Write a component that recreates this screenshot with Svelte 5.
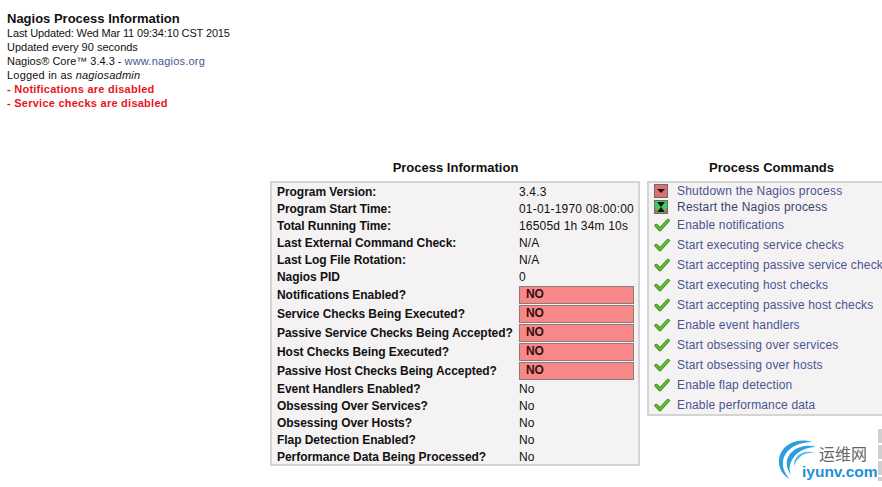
<script>
  const info = [
    ['Program Version:', '3.4.3'],
    ['Program Start Time:', '01-01-1970 08:00:00'],
    ['Total Running Time:', '16505d 1h 34m 10s'],
    ['Last External Command Check:', 'N/A'],
    ['Last Log File Rotation:', 'N/A'],
    ['Nagios PID', '0'],
    ['Notifications Enabled?', 'NO', true],
    ['Service Checks Being Executed?', 'NO', true],
    ['Passive Service Checks Being Accepted?', 'NO', true],
    ['Host Checks Being Executed?', 'NO', true],
    ['Passive Host Checks Being Accepted?', 'NO', true],
    ['Event Handlers Enabled?', 'No'],
    ['Obsessing Over Services?', 'No'],
    ['Obsessing Over Hosts?', 'No'],
    ['Flap Detection Enabled?', 'No'],
    ['Performance Data Being Processed?', 'No']
  ];

  const commands = [
    'Enable notifications',
    'Start executing service checks',
    'Start accepting passive service checks',
    'Start executing host checks',
    'Start accepting passive host checks',
    'Enable event handlers',
    'Start obsessing over services',
    'Start obsessing over hosts',
    'Enable flap detection',
    'Enable performance data'
  ];
</script>

<div class="page">
  <div class="head">
    <div class="title">Nagios Process Information</div>
    <div class="tight">Last Updated: Wed Mar 11 09:34:10 CST 2015</div>
    <div>Updated every 90 seconds</div>
    <div>Nagios® Core™ 3.4.3 - <span class="link wide">www.nagios.org</span></div>
    <div class="wide">Logged in as <i>nagiosadmin</i></div>
    <div class="warn">- Notifications are disabled</div>
    <div class="warn">- Service checks are disabled</div>
  </div>

  <div class="main">
    <section class="info">
      <h2>Process Information</h2>
      <div class="box info-box">
        {#each info as [label, value, bad]}
          <div class="row" class:bad>
            <b>{label}</b>
            {#if bad}
              <span class="no">{value}</span>
            {:else}
              <span class="val">{value}</span>
            {/if}
          </div>
        {/each}
      </div>
    </section>

    <section class="cmds">
      <h2>Process Commands</h2>
      <div class="box cmd-box">
        <div class="cmd small">
          <svg width="14" height="14" viewBox="0 0 14 14">
            <rect x="0.5" y="0.5" width="13" height="13" fill="#e07070" stroke="#6a6a6a" />
            <path d="M3 5h8l-4 4z" fill="#111" />
          </svg>
          <span class="link">Shutdown the Nagios process</span>
        </div>
        <div class="cmd small">
          <svg width="14" height="14" viewBox="0 0 14 14">
            <rect x="0.5" y="0.5" width="13" height="13" fill="#3fcf5f" stroke="#6a6a6a" />
            <path d="M3 2h8L7 7z" fill="#111" />
            <path d="M3 12h8L7 7z" fill="#111" />
            <path d="M1 13V8l4 5z M13 13V8l-4 5z" fill="#c06a60" />
          </svg>
          <span class="plain">Restart the Nagios process</span>
        </div>
        {#each commands as text}
          <div class="cmd">
            <svg width="16" height="16" viewBox="0 0 16 16">
              <path d="M2.2 8.6L6 12.4 14 3.6" fill="none" stroke="#3a8a1a" stroke-width="3.6" stroke-linejoin="round" stroke-linecap="round" />
              <path d="M2.2 8.6L6 12.4 14 3.6" fill="none" stroke="#62c22e" stroke-width="2" stroke-linejoin="round" stroke-linecap="round" />
            </svg>
            <span class="link">{text}</span>
          </div>
        {/each}
      </div>
    </section>
  </div>

  <div class="logo">
    <svg width="42" height="44" viewBox="0 0 42 44">
      <path d="M35 3C20-2 3 5 1 20c-1 9 4 17 11 20C6 34 3 26 6 18 10 8 22 3 35 3z" fill="#2a9fe0" />
      <path d="M38 8C26 4 12 10 9 21c-1 6 1 11 4 15-2-5-2-10 1-15C18 13 28 8 38 8z" fill="#2a9fe0" />
      <path d="M37 14C29 11 20 14 17 21c-1 2-1 4-1 6 1-2 2-5 4-7 4-5 10-7 17-6z" fill="#55b5e8" />
    </svg>
    <div class="logo-cn">运维网</div>
    <div class="logo-en">iyunv.com</div>
  </div>
  <div class="strip"></div>
</div>

<style>
  :global(body) {
    margin: 0;
    background: #fff;
  }
  .page {
    position: relative;
    width: 882px;
    height: 487px;
    overflow: hidden;
    font-family: "Liberation Sans", Arial, sans-serif;
    font-size: 11px;
    line-height: 14px;
    color: #111;
  }
  .head {
    padding: 11px 0 0 7px;
    height: 149px;
    box-sizing: border-box;
  }
  .title {
    font-size: 13px;
    font-weight: bold;
    line-height: 15px;
  }
  .tight {
    letter-spacing: -0.14px;
  }
  .wide {
    letter-spacing: 0.2px;
  }
  .link {
    color: #4a5590;
  }
  .warn {
    color: #e8141c;
    font-weight: bold;
    letter-spacing: 0.25px;
  }
  .main {
    display: flex;
    gap: 7px;
    padding: 11px 0 0 270px;
  }
  h2 {
    margin: 0 0 5px;
    padding-left: 1px;
    font-size: 13px;
    line-height: 16px;
    font-weight: bold;
    text-align: center;
    color: #111;
  }
  .box {
    box-sizing: border-box;
    background: #f4f2f3;
    border: 2px solid #d4d4d4;
  }
  .info {
    width: 370px;
    flex: none;
  }
  .info-box {
    height: 285px;
    padding: 0 5px;
    font-size: 12px;
  }
  .row {
    display: grid;
    grid-template-columns: 242px 115px;
    align-items: center;
    height: 17px;
    letter-spacing: -0.05px;
  }
  .row.bad {
    height: 19px;
  }
  .val {
    letter-spacing: 0.18px;
  }
  .no {
    box-sizing: border-box;
    height: 18px;
    line-height: 15px;
    padding-left: 6px;
    background: #f88888;
    border: 1px solid #8a7a7a;
    font-weight: bold;
    color: #331111;
  }
  .cmds {
    width: 248px;
    flex: none;
  }
  .cmd-box {
    height: 235px;
    padding: 0 0 0 5px;
    font-size: 12px;
    letter-spacing: 0.16px;
  }
  .cmd {
    display: flex;
    align-items: center;
    height: 20px;
    white-space: nowrap;
  }
  .cmd svg {
    flex: none;
    margin-right: 7px;
  }
  .cmd.small {
    height: 16px;
    letter-spacing: 0.22px;
  }
  .cmd.small svg {
    margin-right: 9px;
  }
  .plain {
    color: #3a4470;
  }
  .logo {
    position: absolute;
    left: 778px;
    top: 439px;
    width: 100px;
    height: 46px;
  }
  .logo svg {
    position: absolute;
    left: 0;
    top: 0;
  }
  .logo-cn {
    position: absolute;
    left: 41px;
    top: 5px;
    font-family: "Noto Sans CJK SC", sans-serif;
    font-size: 16px;
    line-height: 18px;
    color: #666;
  }
  .logo-en {
    position: absolute;
    left: 24px;
    top: 25px;
    font-size: 15.5px;
    line-height: 16px;
    font-weight: bold;
    color: #1f8fd8;
  }
  .strip {
    position: absolute;
    left: 878px;
    top: 429px;
    width: 4px;
    height: 52px;
    background: repeating-linear-gradient(#cfcfcf 0 14px, #fff 14px 16px);
  }
</style>
